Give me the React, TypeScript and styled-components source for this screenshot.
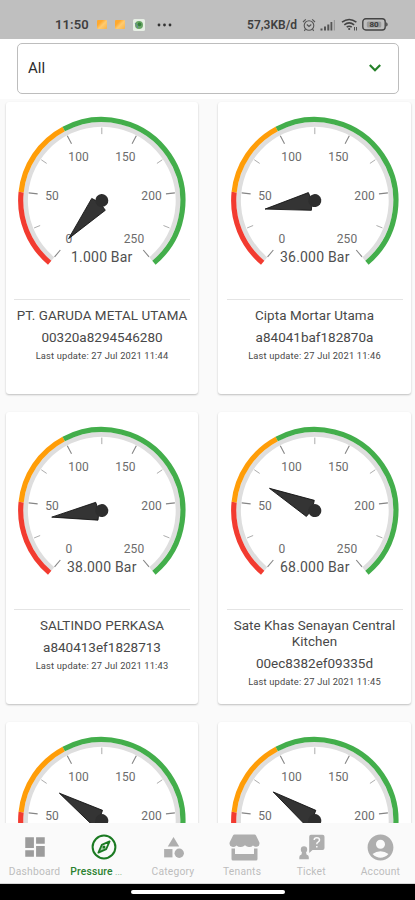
import React from "react";
import styled, { createGlobalStyle } from "styled-components";
import { MdDashboard, MdCategory, MdAccountCircle } from "react-icons/md";

const GlobalStyle = createGlobalStyle`
  * { box-sizing: border-box; }
  body { margin: 0; font-family: Roboto, "Liberation Sans", sans-serif; background: #fafafa; }
`;

const Screen = styled.div`
  width: 415px;
  height: 900px;
  overflow: hidden;
  display: flex;
  flex-direction: column;
  background: #fafafa;
`;

const StatusBar = styled.header`
  flex: none;
  height: 39px;
  padding: 10px 27px 0 55px;
  background: #bfbfbf;
  color: #3f3f3f;
  display: flex;
  align-items: center;
  justify-content: space-between;
`;

const StatusGroup = styled.div<{ $gap: number }>`
  display: flex;
  align-items: center;
  gap: ${(p) => p.$gap}px;
`;

const Clock = styled.span`
  font-size: 13px;
  font-weight: 600;
  letter-spacing: 0.1px;
  line-height: 16px;
`;

const Speed = styled.span`
  font-size: 12px;
  font-weight: 600;
  letter-spacing: 0;
  line-height: 16px;
`;

const Notice = styled.span`
  width: 10px;
  height: 9px;
  border-radius: 1px;
  background: linear-gradient(135deg, #ffa92f 0 30%, #ffcb70 55%, #f8b348);
`;

const FilterBar = styled.div`
  flex: none;
  height: 60px;
  padding: 4px 16px 5px 17px;
  background: #fff;
`;

const Select = styled.button`
  width: 100%;
  height: 51px;
  padding: 0 16px 2px 10px;
  border: 1.5px solid #bdbdbd;
  border-radius: 5px;
  background: #fff;
  display: flex;
  align-items: center;
  justify-content: space-between;
  font: 400 15px/20px Roboto, sans-serif;
  letter-spacing: 0;
  color: #2c2c2c;
`;

const Cards = styled.main`
  flex: 1;
  min-height: 0;
  overflow: hidden;
  padding: 3px 4px 0 6px;
  display: grid;
  grid-template-columns: 192px 193px;
  grid-auto-rows: 292px;
  column-gap: 20px;
  row-gap: 18px;
`;

const Card = styled.article`
  background: #fff;
  border-radius: 3px;
  box-shadow: 0 1px 2px rgba(0, 0, 0, 0.24);
  padding: 0 8px;
  display: flex;
  flex-direction: column;
  align-items: center;
  color: #484848;
  text-align: center;
`;

const GaugeBox = styled.div`
  width: 176px;
  height: 198px;
  border-bottom: 1px solid #e4e4e4;
`;

const Name = styled.h2`
  margin: 8px -2px 0;
  font-size: 13.4px;
  font-weight: 400;
  line-height: 16px;
  letter-spacing: 0.08px;
`;

const DeviceId = styled.div`
  margin-top: 5px;
  font-size: 13.5px;
  line-height: 16px;
`;

const Updated = styled.div`
  margin-top: 5px;
  font-size: 9.3px;
  line-height: 12px;
  letter-spacing: 0.18px;
`;

const Nav = styled.nav`
  flex: none;
  height: 61px;
  background: #fafafa;
  border-bottom: 1px solid #d5d5d5;
  display: grid;
  grid-template-columns: repeat(6, 1fr);
`;

const NavItem = styled.a<{ $active: boolean }>`
  display: flex;
  flex-direction: column;
  align-items: center;
  padding-top: 9px;
  min-width: 0;
  color: ${(p) => (p.$active ? "#1b7a22" : "#aeaeae")};
`;

const NavIcon = styled.span<{ $shift: number }>`
  height: 30px;
  display: flex;
  align-items: center;
  margin-left: ${(p) => p.$shift}px;
`;

const NavLabel = styled.span<{ $active: boolean }>`
  margin-top: 3px;
  margin-left: ${(p) => (p.$active ? 1 : 0)}px;
  align-self: ${(p) => (p.$active ? "flex-start" : "center")};
  font-size: 10.3px;
  line-height: 13px;
  letter-spacing: 0.2px;
  white-space: nowrap;
  font-weight: ${(p) => (p.$active ? 500 : 400)};
  color: ${(p) => (p.$active ? "#2b812f" : "#bdbdbd")};
`;

const Ellipsis = styled.span`
  font-weight: 400;
  font-size: 9px;
  letter-spacing: 0;
  opacity: 0.65;
`;

const SystemBar = styled.footer`
  flex: none;
  height: 16px;
  background: #000;
  display: flex;
  justify-content: center;
  padding-top: 6px;
`;

const HomeHandle = styled.div`
  width: 154px;
  height: 4px;
  border-radius: 2px;
  background: #fff;
`;

const CX = 87.8;
const CY = 98.6;

const angleOf = (value: number) => ((-140 + (value / 250) * 280) * Math.PI) / 180;

const point = (value: number, r: number) => {
  const a = angleOf(value);
  return [CX + r * Math.sin(a), CY - r * Math.cos(a)] as const;
};

const arc = (from: number, to: number, r: number) => {
  const [x1, y1] = point(from, r);
  const [x2, y2] = point(to, r);
  const large = angleOf(to) - angleOf(from) > Math.PI ? 1 : 0;
  return `M${x1} ${y1}A${r} ${r} 0 ${large} 1 ${x2} ${y2}`;
};

const ticks = Array.from({ length: 11 }, (_, i) => i * 25);

const scaleLabels = [
  { text: "0", x: 55, y: 141.4 },
  { text: "50", x: 38, y: 97.6 },
  { text: "100", x: 64.6, y: 58.6 },
  { text: "150", x: 111.4, y: 58.6 },
  { text: "200", x: 137.6, y: 97.6 },
  { text: "250", x: 120, y: 141.4 },
];

function Gauge({ value, reading }: { value: number; reading: string }) {
  return (
    <svg width="176" height="197" viewBox="0 0 176 197" overflow="visible" fontFamily="Roboto, sans-serif">
      <path d={arc(0, 250, 76.2)} fill="none" stroke="#dedede" strokeWidth="4.6" />
      <path d={arc(0, 50, 81.1)} fill="none" stroke="#f23b30" strokeWidth="5.2" />
      <path d={arc(50, 100, 81.1)} fill="none" stroke="#ff9d08" strokeWidth="5.2" />
      <path d={arc(100, 250, 81.1)} fill="none" stroke="#43ae4b" strokeWidth="5.2" />
      {ticks.map((t) => {
        const major = t % 50 === 0;
        const [x1, y1] = point(t, major ? 73.5 : 73);
        const [x2, y2] = point(t, major ? 64.5 : 66.5);
        return (
          <line key={t} x1={x1} y1={y1} x2={x2} y2={y2} stroke={major ? "#858585" : "#a3a3a3"} strokeWidth={major ? 1.1 : 0.9} />
        );
      })}
      {scaleLabels.map((l) => (
        <text key={l.text} x={l.x} y={l.y} fontSize="12" fill="#6c6c6c" textAnchor="middle" letterSpacing="0.1">
          {l.text}
        </text>
      ))}
      <text x={CX} y="160.4" fontSize="14" letterSpacing="0.2" fill="#505050" textAnchor="middle">
        {reading}
      </text>
      <g transform={`translate(${CX} ${CY}) rotate(${(angleOf(value) * 180) / Math.PI})`}>
        <path d="M0-50.5L9-5L5-4H-5L-9-5Z" fill="#343434" stroke="#111" strokeWidth="0.8" />
        <circle r="6.5" fill="#2e2e2e" />
      </g>
    </svg>
  );
}

const devices = [
  { value: 1, reading: "1.000 Bar", name: "PT. GARUDA METAL UTAMA", id: "00320a8294546280", time: "27 Jul 2021 11:44" },
  { value: 36, reading: "36.000 Bar", name: "Cipta Mortar Utama", id: "a84041baf182870a", time: "27 Jul 2021 11:46" },
  { value: 38, reading: "38.000 Bar", name: "SALTINDO PERKASA", id: "a840413ef1828713", time: "27 Jul 2021 11:43" },
  { value: 68, reading: "68.000 Bar", name: "Sate Khas Senayan Central Kitchen", id: "00ec8382ef09335d", time: "27 Jul 2021 11:45" },
  { value: 74, reading: "", name: "", id: "", time: "" },
  { value: 75.5, reading: "", name: "", id: "", time: "" },
];

const CompassIcon = () => (
  <svg width="26" height="26" viewBox="0 0 26 26" fill="none" stroke="currentColor">
    <circle cx="13" cy="13" r="11.4" strokeWidth="2" />
    <path d="M18.6 7.4L15.2 15.1L7.4 18.6L10.8 10.9Z" strokeWidth="1.8" strokeLinejoin="round" />
    <path d="M10.8 10.9L15.2 15.1L7.4 18.6Z" fill="currentColor" fillOpacity="0.35" stroke="none" />
    <circle cx="13" cy="13" r="1.5" fill="currentColor" stroke="none" />
  </svg>
);

const StoreIcon = () => (
  <svg width="31" height="27" viewBox="0 0 31 27" fill="currentColor">
    <path d="M5.5 0.5H25.5Q26.5 0.5 27 1.4L30.3 8.2Q31.2 12 28 12.8Q25.5 13.2 24 11.4Q22 13.4 19.8 12.9Q17.8 12.9 16 11.2Q14.2 12.9 12 12.9Q9.4 13.2 7.6 11.4Q5.2 13.4 3 12.8Q-.2 12 .7 8.2L4 1.4Q4.5.5 5.5.5Z" />
    <path d="M2.5 14.5H6V20H25V14.5H28.5V25Q28.5 26.5 27 26.5H4Q2.5 26.5 2.5 25Z" />
  </svg>
);

const TicketIcon = () => (
  <svg width="26" height="26" viewBox="0 0 26 26" fill="currentColor">
    <path d="M12 0.8H23.5Q25.5.8 25.5 2.8V14Q25.5 16 23.5 16H13.5L10.2 19V2.8Q10.2.8 12 .8Z" />
    <path d="M15.2 6Q15.2 3.8 17.8 3.8Q20.5 3.8 20.5 6Q20.5 7.3 19 8.2Q17.8 8.8 17.8 10.2M17.8 11.9V13.4" fill="none" stroke="#fafafa" strokeWidth="1.5" />
    <circle cx="5" cy="15.5" r="3.2" />
    <path d="M3 18H7L7.5 20.5Q9.8 21 9.8 23V25.3H.3V23Q.3 21 2.5 20.5Z" />
  </svg>
);

const navItems = [
  { label: "Dashboard", icon: <MdDashboard size={26} color="#9c9c9c" />, shift: 1 },
  { label: "Pressure", icon: <CompassIcon />, active: true, shift: 0 },
  { label: "Category", icon: <MdCategory size={25} />, shift: 1 },
  { label: "Tenants", icon: <StoreIcon />, shift: 5 },
  { label: "Ticket", icon: <TicketIcon />, shift: 1 },
  { label: "Account", icon: <MdAccountCircle size={31} />, shift: 1 },
];

const AppNotice = () => (
  <svg width="12" height="12" viewBox="0 0 12 12">
    <rect width="12" height="12" rx="1.5" fill="#e7efe5" />
    <circle cx="6" cy="6" r="4" fill="#69a565" />
    <circle cx="6.5" cy="5.4" r="1.8" fill="#347e3a" />
    <path d="M2 4L4.5 7V9" stroke="#66859a" strokeWidth="1" fill="none" />
  </svg>
);

const MoreDots = () => (
  <svg width="19" height="4" viewBox="-4 0 19 4" fill="#333">
    <circle cx="2" cy="2" r="1.4" />
    <circle cx="7.5" cy="2" r="1.4" />
    <circle cx="13" cy="2" r="1.4" />
  </svg>
);

const AlarmIcon = () => (
  <svg width="14" height="14" viewBox="0 0 14 14" fill="none" stroke="#555" strokeWidth="1.1">
    <circle cx="7" cy="7.5" r="4.8" />
    <path d="M1 4L3.8 1.3M13 4L10.2 1.3M3.5 11.2L2.3 12.8M10.5 11.2L11.7 12.8M4.8 6.5L7 8.5L9.3 6.5" />
  </svg>
);

const SignalIcon = () => (
  <svg width="16" height="12" viewBox="0 0 16 12" fill="#555">
    <path d="M.5 9.5H2.5V11.5H.5ZM4 7.5H6V11.5H4ZM7.3 5.5H9.3V11.5H7.3ZM10.5 3H12.3V11.5H10.5Z" />
    <path d="M13.8 1H15V11.5H13.8Z" fill="#999" />
  </svg>
);

const WifiIcon = () => (
  <svg width="17" height="13" viewBox="0 0 17 13" fill="none" stroke="#444" strokeWidth="1.6">
    <path d="M1 4.2Q8.2-1.3 15.4 4.2M3.3 6.8Q8.2 3 13.1 6.8M5.7 9.2Q8.2 7.2 10.7 9.2" />
    <circle cx="8.2" cy="11" r="1.1" fill="#444" stroke="none" />
    <path d="M13.5 9V12.5M15.5 9V12.5" strokeWidth="0.9" />
  </svg>
);

const BatteryIcon = () => (
  <svg width="26" height="13" viewBox="0 0 26 13">
    <rect x="0.8" y="0.8" width="22.4" height="11.2" rx="3" fill="none" stroke="#444" strokeWidth="1.4" />
    <path d="M24.2 4.3Q25.6 4.5 25.6 6.4Q25.6 8.3 24.2 8.5Z" fill="#444" />
    <rect x="4.8" y="3.4" width="14.5" height="6" rx="1.5" fill="#999" />
    <text x="12" y="9.3" fontSize="8" fontWeight="600" textAnchor="middle" fill="#333" fontFamily="Roboto, sans-serif">80</text>
  </svg>
);

export default function App() {
  return (
    <Screen>
      <GlobalStyle />
      <StatusBar>
        <StatusGroup $gap={8}>
          <Clock>11:50</Clock>
          <Notice />
          <Notice />
          <AppNotice />
          <MoreDots />
        </StatusGroup>
        <StatusGroup $gap={4.5}>
          <Speed>57,3KB/d</Speed>
          <AlarmIcon />
          <SignalIcon />
          <WifiIcon />
          <BatteryIcon />
        </StatusGroup>
      </StatusBar>
      <FilterBar>
        <Select>
          All
          <svg width="14" height="10" viewBox="0 0 14 10" fill="none" stroke="#258129" strokeWidth="2.2">
            <path d="M1.8 2L7 7.2L12.2 2" />
          </svg>
        </Select>
      </FilterBar>
      <Cards>
        {devices.map((d, i) => (
          <Card key={i}>
            <GaugeBox>
              <Gauge value={d.value} reading={d.reading} />
            </GaugeBox>
            {d.name && <Name>{d.name}</Name>}
            {d.id && <DeviceId>{d.id}</DeviceId>}
            {d.time && <Updated>Last update: {d.time}</Updated>}
          </Card>
        ))}
      </Cards>
      <Nav>
        {navItems.map((n) => (
          <NavItem key={n.label} $active={!!n.active}>
            <NavIcon $shift={n.shift}>{n.icon}</NavIcon>
            <NavLabel $active={!!n.active}>
              {n.label}
              {n.active && <Ellipsis> ...</Ellipsis>}
            </NavLabel>
          </NavItem>
        ))}
      </Nav>
      <SystemBar>
        <HomeHandle />
      </SystemBar>
    </Screen>
  );
}
